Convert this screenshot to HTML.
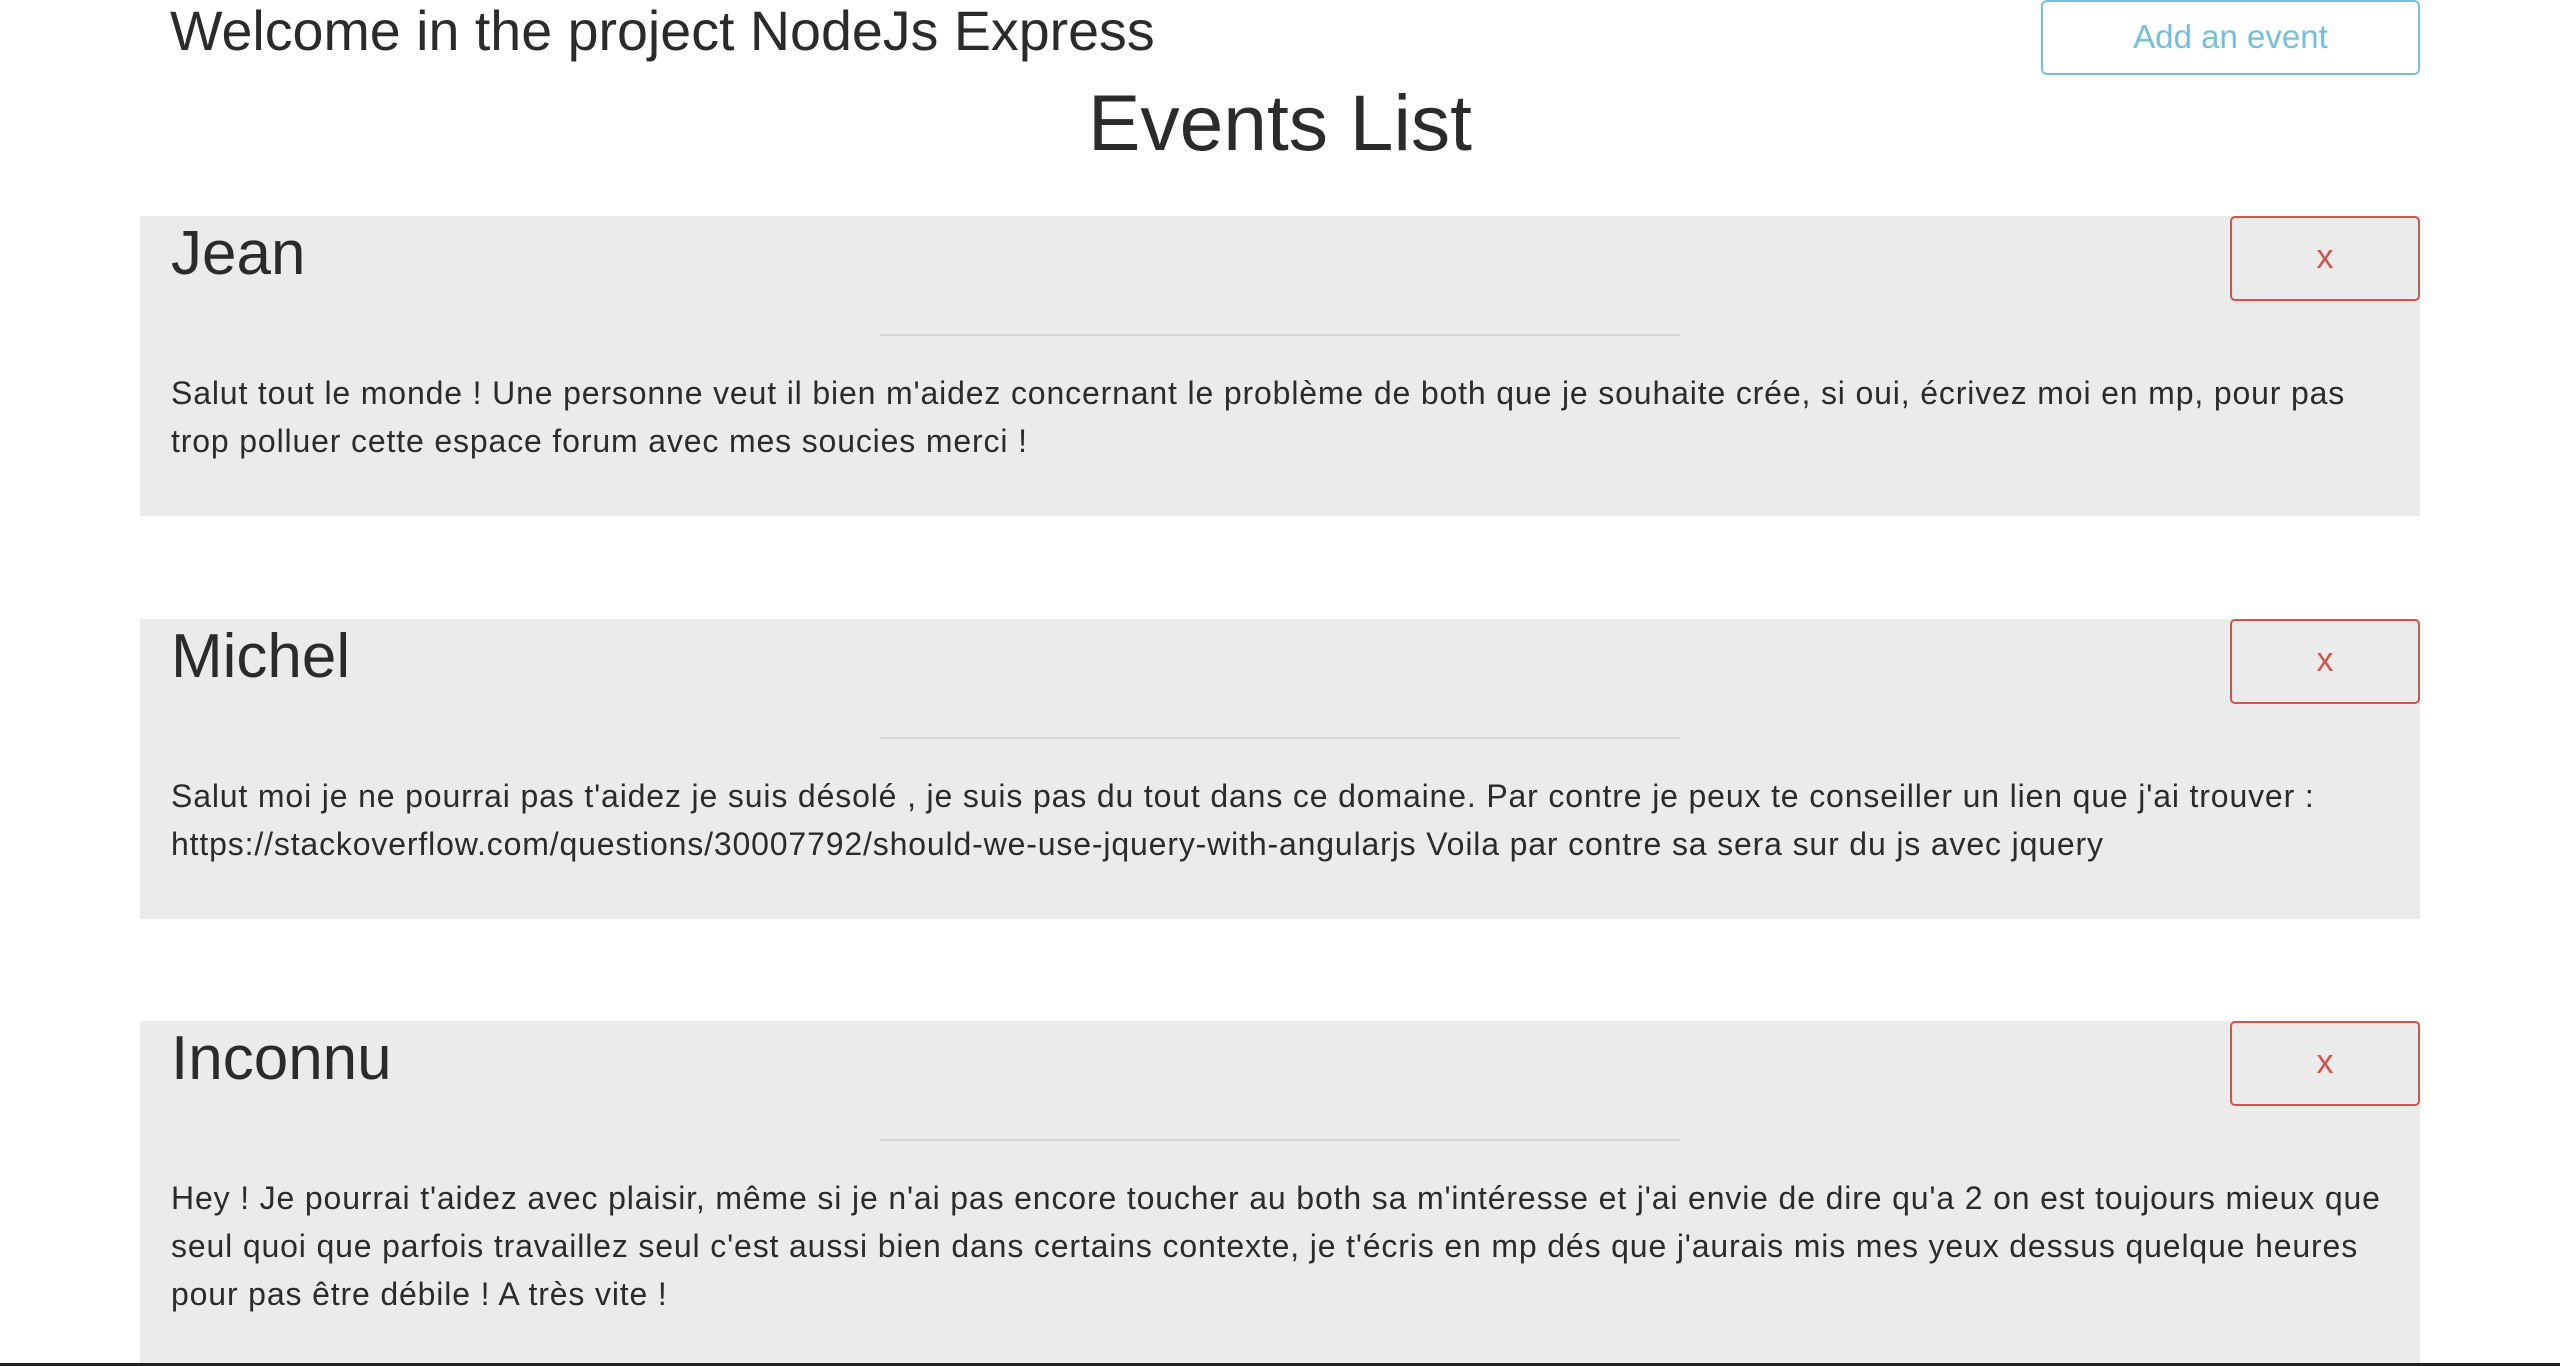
<!DOCTYPE html>
<html><head><meta charset="utf-8"><style>
*{margin:0;padding:0;box-sizing:border-box}
html,body{width:2560px;height:1366px;overflow:hidden}
body{background:#fff;position:relative;font-family:"Liberation Sans",Arial,sans-serif;color:#2b2b2b}
.a{position:absolute;white-space:nowrap;line-height:1}
.card{position:absolute;left:140px;width:2280px;height:300px;background:#ebebeb}
.card h1{position:absolute;left:31px;top:7px;font-size:62px;font-weight:400;line-height:1;color:#2b2b2b}
.x{position:absolute;right:0;top:0;width:190px;height:85px;border:2px solid #d0534f;border-radius:5px;color:#d0534f;font-size:34px;text-align:center;line-height:78px}
.hr{position:absolute;left:740px;top:118px;width:800px;height:2px;background:#d4d4d4}
.p{position:absolute;left:31px;top:153px;font-size:32px;letter-spacing:0.85px;line-height:48px;white-space:nowrap;color:#2b2b2b}
</style></head><body>
<div class="a" style="left:170px;top:4px;font-size:55.6px">Welcome in the project NodeJs Express</div>
<div style="position:absolute;left:2041px;top:0;width:379px;height:75px;border:2px solid #74bfdd;border-radius:6px;color:#74bfdd;font-size:33px;text-align:center;line-height:70px">Add an event</div>
<div class="a" style="left:0;width:2560px;text-align:center;top:84px;font-size:78.5px">Events List</div>

<div class="card" style="top:216px">
<h1>Jean</h1><div class="x">x</div><div class="hr"></div>
<div class="p">Salut tout le monde ! Une personne veut il bien m'aidez concernant le problème de both que je souhaite crée, si oui, écrivez moi en mp, pour pas<br>trop polluer cette espace forum avec mes soucies merci !</div>
</div>

<div class="card" style="top:619px">
<h1>Michel</h1><div class="x">x</div><div class="hr"></div>
<div class="p">Salut moi je ne pourrai pas t'aidez je suis désolé , je suis pas du tout dans ce domaine. Par contre je peux te conseiller un lien que j'ai trouver :<br>https://stackoverflow.com/questions/30007792/should-we-use-jquery-with-angularjs Voila par contre sa sera sur du js avec jquery</div>
</div>

<div class="card" style="top:1021px;height:342px">
<h1>Inconnu</h1><div class="x">x</div><div class="hr"></div>
<div class="p">Hey ! Je pourrai t'aidez avec plaisir, même si je n'ai pas encore toucher au both sa m'intéresse et j'ai envie de dire qu'a 2 on est toujours mieux que<br>seul quoi que parfois travaillez seul c'est aussi bien dans certains contexte, je t'écris en mp dés que j'aurais mis mes yeux dessus quelque heures<br>pour pas être débile ! A très vite !</div>
</div>
<div style="position:absolute;left:0;top:1363px;width:2560px;height:3px;background:#222"></div>
</body></html>
